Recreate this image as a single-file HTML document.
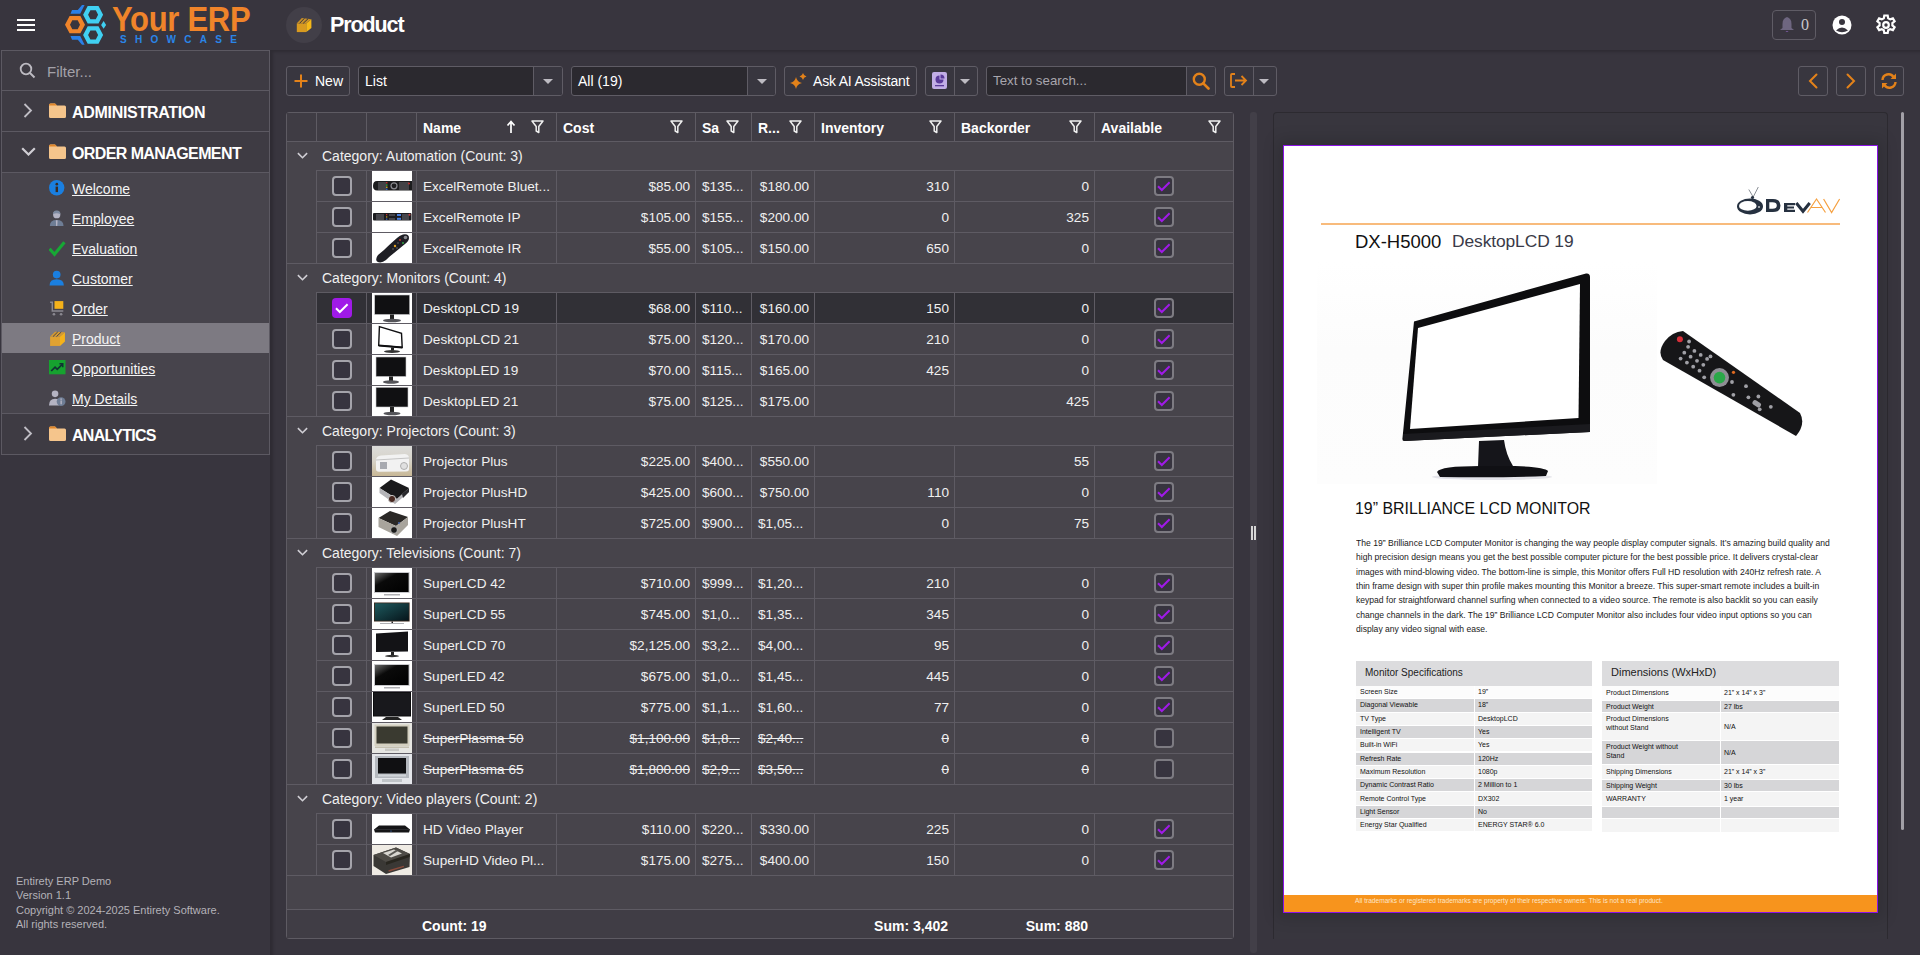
<!DOCTYPE html><html><head><meta charset="utf-8"><style>
*{box-sizing:border-box;margin:0;padding:0}
html,body{width:1920px;height:955px;overflow:hidden;background:#38353e;font-family:"Liberation Sans", sans-serif;color:#f2f2f2}
.a{position:absolute}
.t{position:absolute;white-space:nowrap;line-height:1}
.cb{position:absolute;width:20px;height:20px;border:2px solid #a4a3aa;border-radius:4px;background:#37343f}
.cb2{position:absolute;width:20px;height:20px;border:2px solid #7d7b82;border-radius:4px;background:#37343f}
.cbk{position:absolute;width:20px;height:20px;border-radius:4px;background:#a01ae8}
.btn{position:absolute;height:30px;border:1px solid #5f5c65;border-radius:3px;background:#38363f}
.cmb{position:absolute;height:30px;border:1px solid #5f5c65;border-radius:3px;background:#2b292f;overflow:hidden}
.car{position:absolute;width:0;height:0;border-left:5px solid transparent;border-right:5px solid transparent;border-top:5px solid #bdbbc2}
</style></head><body>

<div class="a" style="left:17px;top:19px;width:18px;height:2px;background:#fff"></div>
<div class="a" style="left:17px;top:24px;width:18px;height:2px;background:#fff"></div>
<div class="a" style="left:17px;top:29px;width:18px;height:2px;background:#fff"></div>
<svg class="a" style="left:0px;top:0px" width="110" height="50" viewBox="0 0 110 50"><path fill-rule="evenodd" fill="#f0842a" d="M65,24.7 L69.6,16.1 L80.4,16.1 L85,24.7 L80.4,33.3 L69.6,33.3Z M70,24.7 L72.3,20.2 L77.7,20.2 L80,24.7 L77.7,29.2 L72.3,29.2Z"/><path fill-rule="evenodd" fill="#40d0f2" d="M83.1,14.8 L87.69999999999999,6.0 L98.5,6.0 L103.1,14.8 L98.5,23.6 L87.69999999999999,23.6Z M88.1,14.8 L90.39999999999999,10.3 L95.8,10.3 L98.1,14.8 L95.8,19.3 L90.39999999999999,19.3Z"/><path fill-rule="evenodd" fill="#40d0f2" d="M83.1,35.0 L87.69999999999999,26.2 L98.5,26.2 L103.1,35.0 L98.5,43.8 L87.69999999999999,43.8Z M88.1,35.0 L90.39999999999999,30.5 L95.8,30.5 L98.1,35.0 L95.8,39.5 L90.39999999999999,39.5Z"/><path fill="#40d0f2" d="M103.6,21 L106.1,24.9 L103.6,28.8 L101.1,24.9Z"/><path fill="#2a80e8" d="M70.5,13.7 L72,10 L77.8,10 L82,5 L84.6,5 L80.2,13.7Z"/><path fill="#2a80e8" d="M70.5,36.1 L72,39.8 L77.8,39.8 L82,44.8 L84.6,44.8 L80.2,36.1Z"/></svg>
<div class="t" style="left:112px;top:1px;font-size:31px;font-weight:700;color:#f0842a;letter-spacing:-0.3px;transform:scaleY(1.14);transform-origin:0 0">Your ERP</div>
<div class="t" style="left:120px;top:35px;font-size:10px;font-weight:700;color:#2a85e8;letter-spacing:8.3px">SHOWCASE</div>
<div class="a" style="left:286px;top:7px;width:36px;height:36px;border-radius:18px;background:#423f48"></div>
<svg class="a" style="left:296px;top:17px" width="16" height="16" viewBox="0 0 16 16">
<path d="M0.8,6.3 H10.3 V15.1 H0.8Z" fill="#d89a20"/><path d="M10.3,6.3 L15.4,2.3 V11 L10.3,15.1Z" fill="#f5b818"/><path d="M0.8,6.3 L5.9,0.9 L15.4,2.3 L10.3,6.3Z" fill="#c89028"/>
<line x1="3.6" y1="6.3" x2="8.4" y2="1.3" stroke="#38353e" stroke-width="1"/><line x1="7.2" y1="6.3" x2="12" y2="1.8" stroke="#38353e" stroke-width="1"/>
</svg>
<div class="t" style="left:330px;top:15px;font-size:21.5px;font-weight:700;color:#fff;letter-spacing:-1.1px">Product</div>
<div class="a" style="left:1772px;top:10px;width:44px;height:30px;border:1px solid #5f5c65;border-radius:4px"></div>
<svg class="a" style="left:1779px;top:16px" width="16" height="18" viewBox="0 0 16 18"><path d="M8,1 C5,2 3.5,4 3.5,8 L3.5,12 L1,14 L15,14 L12.5,12 L12.5,8 C12.5,4 11,2 8,1Z" fill="#6e6680"/><path d="M6.5,15 Q8,17 9.5,15Z" fill="#7a5aa0"/></svg>
<div class="t" style="left:1801px;top:17px;font-size:16px;font-family:'Liberation Serif';color:#c8c6cc">0</div>
<svg class="a" style="left:1832px;top:15px" width="20" height="20" viewBox="0 0 20 20"><circle cx="10" cy="10" r="9.5" fill="#fff"/><circle cx="10" cy="7" r="3" fill="#38353e"/><path d="M4,15.5 Q10,9.5 16,15.5 Q10,19 4,15.5Z" fill="#38353e"/></svg>
<svg class="a" style="left:1874px;top:13px" width="24" height="24" viewBox="0 0 24 24"><path fill="none" stroke="#fff" stroke-width="2.2" d="M10.3,2.5h3.4l.5,2.8 2,1.1 2.7-1 1.7,2.9-2.2,1.8v2.3l2.2,1.8-1.7,2.9-2.7-1-2,1.1-.5,2.8h-3.4l-.5-2.8-2-1.1-2.7,1-1.7-2.9 2.2-1.8v-2.3L3.4,8.3l1.7-2.9 2.7,1 2-1.1z"/><circle cx="12" cy="12" r="2.8" fill="none" stroke="#fff" stroke-width="2.2"/></svg>
<div class="a" style="left:1px;top:50px;width:269px;height:405px;background:#3e3b43;border:1px solid #5c5962"></div>
<svg class="a" style="left:19px;top:62px" width="17" height="17" viewBox="0 0 17 17"><circle cx="7" cy="7" r="5.3" fill="none" stroke="#bdbbc2" stroke-width="1.8"/><line x1="11" y1="11" x2="15.5" y2="15.5" stroke="#bdbbc2" stroke-width="2"/></svg>
<div class="t" style="left:47px;top:64px;font-size:15px;color:#a3a1a8">Filter...</div>
<div class="a" style="left:2px;top:90px;width:267px;height:1px;background:#5c5962"></div>
<div class="a" style="left:2px;top:131px;width:267px;height:1px;background:#5c5962"></div>
<div class="a" style="left:2px;top:172px;width:267px;height:1px;background:#5c5962"></div>
<div class="a" style="left:2px;top:173px;width:267px;height:240px;background:#47444c"></div>
<div class="a" style="left:2px;top:323px;width:267px;height:30px;background:#7d7a82"></div>
<div class="a" style="left:2px;top:413px;width:267px;height:1px;background:#5c5962"></div>
<svg class="a" style="left:23px;top:103px" width="10" height="15" viewBox="0 0 10 15"><path d="M1.5,1 L8,7.5 L1.5,14" fill="none" stroke="#c0bec5" stroke-width="1.8"/></svg>
<svg class="a" style="left:49px;top:103px" width="17" height="15" viewBox="0 0 17 15"><path d="M0,2 Q0,0.5 1.5,0.5 L6,0.5 L8,2.5 L15.5,2.5 Q17,2.5 17,4 L17,13.5 Q17,15 15.5,15 L1.5,15 Q0,15 0,13.5Z" fill="#f5c58c"/><path d="M0,2 Q0,0.5 1.5,0.5 L6,0.5 L8,2.5 L0,2.5Z" fill="#e0862a"/></svg>
<div class="t" style="left:72px;top:105px;font-size:16px;font-weight:700;color:#fff;letter-spacing:-0.3px">ADMINISTRATION</div>
<svg class="a" style="left:21px;top:147px" width="15" height="9" viewBox="0 0 15 9"><path d="M1.2,1.2 L7.5,7.5 L13.8,1.2" fill="none" stroke="#d0ced4" stroke-width="2.2"/></svg>
<svg class="a" style="left:49px;top:144px" width="17" height="15" viewBox="0 0 17 15"><path d="M0,2 Q0,0.5 1.5,0.5 L6,0.5 L8,2.5 L15.5,2.5 Q17,2.5 17,4 L17,13.5 Q17,15 15.5,15 L1.5,15 Q0,15 0,13.5Z" fill="#f5c58c"/><path d="M0,2 Q0,0.5 1.5,0.5 L6,0.5 L8,2.5 L0,2.5Z" fill="#e0862a"/></svg>
<div class="t" style="left:72px;top:146px;font-size:16px;font-weight:700;color:#fff;letter-spacing:-0.6px">ORDER MANAGEMENT</div>
<svg class="a" style="left:23px;top:426px" width="10" height="15" viewBox="0 0 10 15"><path d="M1.5,1 L8,7.5 L1.5,14" fill="none" stroke="#c0bec5" stroke-width="1.8"/></svg>
<svg class="a" style="left:49px;top:426px" width="17" height="15" viewBox="0 0 17 15"><path d="M0,2 Q0,0.5 1.5,0.5 L6,0.5 L8,2.5 L15.5,2.5 Q17,2.5 17,4 L17,13.5 Q17,15 15.5,15 L1.5,15 Q0,15 0,13.5Z" fill="#f5c58c"/><path d="M0,2 Q0,0.5 1.5,0.5 L6,0.5 L8,2.5 L0,2.5Z" fill="#e0862a"/></svg>
<div class="t" style="left:72px;top:428px;font-size:16px;font-weight:700;color:#fff;letter-spacing:-0.7px">ANALYTICS</div>
<svg class="a" style="left:49px;top:180px" width="16.5" height="16.5" viewBox="0 0 15 15"><circle cx="7" cy="7" r="7" fill="#1a7fe0"/><rect x="6" y="6" width="2.2" height="5" fill="#3a2a20"/><circle cx="7.1" cy="3.8" r="1.2" fill="#3a2a20"/></svg>
<div class="t" style="left:72px;top:182px;font-size:14px;color:#f4f4f4;text-decoration:underline;text-underline-offset:1px">Welcome</div>
<svg class="a" style="left:49px;top:210px" width="16.5" height="16.5" viewBox="0 0 15 15"><circle cx="7" cy="4.3" r="3.3" fill="#b4b3c4"/><path d="M3.6,3.8 Q3.8,0.3 7,0.5 Q10.2,0.3 10.4,3.8 Q7,2.2 3.6,3.8Z" fill="#7d8aa0"/><path d="M0.8,14.5 Q0.8,9.2 7,9.2 Q13.2,9.2 13.2,14.5Z" fill="#6e7d95"/><path d="M6.2,9.3 L7.8,9.3 L7.5,14.5 L6.5,14.5Z" fill="#b4b3c4"/></svg>
<div class="t" style="left:72px;top:212px;font-size:14px;color:#f4f4f4;text-decoration:underline;text-underline-offset:1px">Employee</div>
<svg class="a" style="left:49px;top:240px" width="16.5" height="16.5" viewBox="0 0 15 15"><path d="M0.5,8 L5,13 L14,2" fill="none" stroke="#17a835" stroke-width="2.8"/></svg>
<div class="t" style="left:72px;top:242px;font-size:14px;color:#f4f4f4;text-decoration:underline;text-underline-offset:1px">Evaluation</div>
<svg class="a" style="left:49px;top:270px" width="16.5" height="16.5" viewBox="0 0 15 15"><circle cx="7" cy="4.2" r="3.5" fill="#1a7fe0"/><path d="M0.5,14 Q0.5,8.5 7,8.5 Q13.5,8.5 13.5,14Z" fill="#1a7fe0"/></svg>
<div class="t" style="left:72px;top:272px;font-size:14px;color:#f4f4f4;text-decoration:underline;text-underline-offset:1px">Customer</div>
<svg class="a" style="left:49px;top:300px" width="16.5" height="16.5" viewBox="0 0 15 15"><rect x="5" y="1" width="8" height="7" fill="#f5b21a"/><path d="M1,2 L3,2 L3,10 L13,10" fill="none" stroke="#8a8890" stroke-width="1.3"/><circle cx="4.5" cy="13" r="1.2" fill="#8a8890"/><circle cx="11" cy="13" r="1.2" fill="#8a8890"/></svg>
<div class="t" style="left:72px;top:302px;font-size:14px;color:#f4f4f4;text-decoration:underline;text-underline-offset:1px">Order</div>
<svg class="a" style="left:49px;top:330px" width="16.5" height="16.5" viewBox="0 0 15 15"><polygon points="1,6 10,6 10,14.5 1,14.5" fill="#e0a232"/><polygon points="10,6 14.5,2 14.5,10.5 10,14.5" fill="#f5b21a"/><polygon points="1,6 5.5,1.5 14.5,2 10,6" fill="#d59a30"/><line x1="3.6" y1="6" x2="8" y2="1.7" stroke="#47444c" stroke-width="0.9"/><line x1="6.8" y1="6" x2="11.2" y2="1.8" stroke="#47444c" stroke-width="0.9"/></svg>
<div class="t" style="left:72px;top:332px;font-size:14px;color:#f4f4f4;text-decoration:underline;text-underline-offset:1px">Product</div>
<svg class="a" style="left:49px;top:360px" width="16.5" height="16.5" viewBox="0 0 15 15"><rect x="0" y="0" width="15" height="13" fill="#16a22f"/><path d="M2,10 L5.5,6.5 L7.5,8.5 L12,4" fill="none" stroke="#133" stroke-width="1.6"/><path d="M9.5,3.5 L12.5,3.5 L12.5,6.5" fill="none" stroke="#133" stroke-width="1.4"/></svg>
<div class="t" style="left:72px;top:362px;font-size:14px;color:#f4f4f4;text-decoration:underline;text-underline-offset:1px">Opportunities</div>
<svg class="a" style="left:49px;top:390px" width="16.5" height="16.5" viewBox="0 0 15 15"><circle cx="5.5" cy="3.5" r="3" fill="#b4b3c2"/><path d="M0,14 Q0,8 5.5,8 Q9,8 10,10 L9,14Z" fill="#b4b3c2"/><circle cx="11" cy="10.5" r="4" fill="#6e7d95"/><rect x="10.4" y="9.5" width="1.3" height="3.5" fill="#b4b3c2"/><circle cx="11" cy="8.3" r="0.7" fill="#b4b3c2"/></svg>
<div class="t" style="left:72px;top:392px;font-size:14px;color:#f4f4f4;text-decoration:underline;text-underline-offset:1px">My Details</div>
<div class="t" style="left:16px;top:876.0px;font-size:11px;color:#b4b2b8">Entirety ERP Demo</div>
<div class="t" style="left:16px;top:890.3px;font-size:11px;color:#b4b2b8">Version 1.1</div>
<div class="t" style="left:16px;top:904.6px;font-size:11px;color:#b4b2b8">Copyright © 2024-2025 Entirety Software.</div>
<div class="t" style="left:16px;top:918.9px;font-size:11px;color:#b4b2b8">All rights reserved.</div>
<div class="a" style="left:270px;top:50px;width:1650px;height:905px;box-shadow:inset 3px 2px 3px rgba(0,0,0,0.18)"></div>
<div class="btn" style="left:286px;top:66px;width:64px"></div>
<svg class="a" style="left:294px;top:74px" width="14" height="14" viewBox="0 0 14 14"><path d="M7,0.5V13.5M0.5,7H13.5" stroke="#e3821a" stroke-width="2"/></svg>
<div class="t" style="left:315px;top:74px;font-size:14px;color:#fff">New</div>
<div class="cmb" style="left:358px;top:66px;width:205px"><div class="a" style="left:174px;top:0;width:30px;height:28px;background:#38363f;border-left:1px solid #5f5c65"></div></div>
<div class="car" style="left:543px;top:79px"></div>
<div class="t" style="left:365px;top:74px;font-size:14px;color:#fff">List</div>
<div class="cmb" style="left:571px;top:66px;width:205px"><div class="a" style="left:175px;top:0;width:29px;height:28px;background:#38363f;border-left:1px solid #5f5c65"></div></div>
<div class="car" style="left:757px;top:79px"></div>
<div class="t" style="left:578px;top:74px;font-size:14px;color:#fff">All (19)</div>
<div class="btn" style="left:784px;top:66px;width:133px"></div>
<svg class="a" style="left:790px;top:73px" width="17" height="17" viewBox="0 0 17 17"><path d="M6,4 Q7,9 12,10 Q7,11 6,16 Q5,11 0,10 Q5,9 6,4Z" fill="#e3821a"/><path d="M13,0 Q13.6,2.6 16.5,3.5 Q13.6,4.4 13,7 Q12.4,4.4 9.5,3.5 Q12.4,2.6 13,0Z" fill="#e3821a"/></svg>
<div class="t" style="left:813px;top:74px;font-size:14px;color:#fff;letter-spacing:-0.2px">Ask AI Assistant</div>
<div class="btn" style="left:925px;top:66px;width:53px"><div class="a" style="left:28px;top:0;width:1px;height:28px;background:#5f5c65"></div></div>
<svg class="a" style="left:932px;top:72px" width="16" height="17" viewBox="0 0 16 17"><rect x="0" y="0" width="15" height="17" rx="2" fill="#c2aee6"/><path d="M7.5,3.5 A4,4 0 1 0 11.5,7.5 L7.5,7.5Z" fill="#5a3a9a"/><path d="M8.5,2.5 A4,4 0 0 1 12.5,6.5 L8.5,6.5Z" fill="#5a3a9a"/><rect x="3" y="13" width="9" height="1.3" fill="#5a3a9a"/></svg>
<div class="car" style="left:960px;top:79px"></div>
<div class="cmb" style="left:986px;top:66px;width:230px"><div class="a" style="left:199px;top:0;width:30px;height:28px;background:#38363f;border-left:1px solid #5f5c65"></div></div>
<div class="t" style="left:993px;top:74px;font-size:13.3px;color:#a8a6ad">Text to search...</div>
<svg class="a" style="left:1192px;top:72px" width="18" height="18" viewBox="0 0 18 18"><circle cx="7.3" cy="7.3" r="5.5" fill="none" stroke="#e3821a" stroke-width="2.4"/><line x1="11.3" y1="11.3" x2="16.5" y2="16.5" stroke="#e3821a" stroke-width="2.6" stroke-linecap="round"/></svg>
<div class="btn" style="left:1224px;top:66px;width:53px"><div class="a" style="left:28px;top:0;width:1px;height:28px;background:#5f5c65"></div></div>
<svg class="a" style="left:1230px;top:73px" width="18" height="15" viewBox="0 0 18 15"><path d="M5,1 H2 Q1,1 1,2 V13 Q1,14 2,14 H5" fill="none" stroke="#e3821a" stroke-width="1.8"/><path d="M5,7.5 H16 M11.5,3 L16,7.5 L11.5,12" fill="none" stroke="#e3821a" stroke-width="1.8"/></svg>
<div class="car" style="left:1259px;top:79px"></div>
<div class="btn" style="left:1798px;top:66px;width:30px"></div>
<div class="btn" style="left:1836px;top:66px;width:30px"></div>
<div class="btn" style="left:1874px;top:66px;width:30px"></div>
<svg class="a" style="left:1808px;top:73px" width="10" height="16" viewBox="0 0 10 16"><path d="M8.5,1.5 L2,8 L8.5,14.5" fill="none" stroke="#e3821a" stroke-width="2" stroke-linecap="round"/></svg>
<svg class="a" style="left:1846px;top:73px" width="10" height="16" viewBox="0 0 10 16"><path d="M1.5,1.5 L8,8 L1.5,14.5" fill="none" stroke="#e3821a" stroke-width="2" stroke-linecap="round"/></svg>
<svg class="a" style="left:1880px;top:73px" width="18" height="16" viewBox="0 0 18 16"><path d="M2.5,7 A6,6 0 0 1 13.5,4" fill="none" stroke="#e3821a" stroke-width="2.4"/><path d="M15.5,9 A6,6 0 0 1 4.5,12" fill="none" stroke="#e3821a" stroke-width="2.4"/><path d="M16,0.5 V6 H10.5Z" fill="#e3821a"/><path d="M2,15.5 V10 H7.5Z" fill="#e3821a"/></svg>
<div class="a" style="left:286px;top:112px;width:948px;height:827px;background:#47444b;border:1px solid #5e5b63;border-radius:3px"></div>
<div class="a" style="left:287px;top:113px;width:946px;height:29px;background:#3f3c44;border-bottom:1px solid #5e5b63"></div>
<div class="a" style="left:316px;top:113px;width:1px;height:28px;background:#5e5b63"></div>
<div class="a" style="left:366px;top:113px;width:1px;height:28px;background:#5e5b63"></div>
<div class="a" style="left:416px;top:113px;width:1px;height:28px;background:#5e5b63"></div>
<div class="a" style="left:556px;top:113px;width:1px;height:28px;background:#5e5b63"></div>
<div class="a" style="left:695px;top:113px;width:1px;height:28px;background:#5e5b63"></div>
<div class="a" style="left:751px;top:113px;width:1px;height:28px;background:#5e5b63"></div>
<div class="a" style="left:814px;top:113px;width:1px;height:28px;background:#5e5b63"></div>
<div class="a" style="left:954px;top:113px;width:1px;height:28px;background:#5e5b63"></div>
<div class="a" style="left:1094px;top:113px;width:1px;height:28px;background:#5e5b63"></div>
<div class="t" style="left:423px;top:121px;font-size:14px;font-weight:700;color:#fff">Name</div>
<svg class="a" style="left:531px;top:120px" width="13" height="14" viewBox="0 0 13 14"><path d="M1,1 H12 L7.8,6.5 V12.5 L5.2,11 V6.5Z" fill="none" stroke="#f0f0f0" stroke-width="1.5" stroke-linejoin="round"/></svg>
<div class="t" style="left:563px;top:121px;font-size:14px;font-weight:700;color:#fff">Cost</div>
<svg class="a" style="left:670px;top:120px" width="13" height="14" viewBox="0 0 13 14"><path d="M1,1 H12 L7.8,6.5 V12.5 L5.2,11 V6.5Z" fill="none" stroke="#f0f0f0" stroke-width="1.5" stroke-linejoin="round"/></svg>
<div class="t" style="left:702px;top:121px;font-size:14px;font-weight:700;color:#fff">Sa</div>
<svg class="a" style="left:726px;top:120px" width="13" height="14" viewBox="0 0 13 14"><path d="M1,1 H12 L7.8,6.5 V12.5 L5.2,11 V6.5Z" fill="none" stroke="#f0f0f0" stroke-width="1.5" stroke-linejoin="round"/></svg>
<div class="t" style="left:758px;top:121px;font-size:14px;font-weight:700;color:#fff">R...</div>
<svg class="a" style="left:789px;top:120px" width="13" height="14" viewBox="0 0 13 14"><path d="M1,1 H12 L7.8,6.5 V12.5 L5.2,11 V6.5Z" fill="none" stroke="#f0f0f0" stroke-width="1.5" stroke-linejoin="round"/></svg>
<div class="t" style="left:821px;top:121px;font-size:14px;font-weight:700;color:#fff">Inventory</div>
<svg class="a" style="left:929px;top:120px" width="13" height="14" viewBox="0 0 13 14"><path d="M1,1 H12 L7.8,6.5 V12.5 L5.2,11 V6.5Z" fill="none" stroke="#f0f0f0" stroke-width="1.5" stroke-linejoin="round"/></svg>
<div class="t" style="left:961px;top:121px;font-size:14px;font-weight:700;color:#fff">Backorder</div>
<svg class="a" style="left:1069px;top:120px" width="13" height="14" viewBox="0 0 13 14"><path d="M1,1 H12 L7.8,6.5 V12.5 L5.2,11 V6.5Z" fill="none" stroke="#f0f0f0" stroke-width="1.5" stroke-linejoin="round"/></svg>
<div class="t" style="left:1101px;top:121px;font-size:14px;font-weight:700;color:#fff">Available</div>
<svg class="a" style="left:1208px;top:120px" width="13" height="14" viewBox="0 0 13 14"><path d="M1,1 H12 L7.8,6.5 V12.5 L5.2,11 V6.5Z" fill="none" stroke="#f0f0f0" stroke-width="1.5" stroke-linejoin="round"/></svg>
<svg class="a" style="left:506px;top:120px" width="10" height="14" viewBox="0 0 10 14"><path d="M5,13 V2 M1.5,5.5 L5,1.5 L8.5,5.5" fill="none" stroke="#fff" stroke-width="1.7"/></svg>
<div class="a" style="left:287px;top:141px;width:946px;height:1px;background:#5e5b63"></div>
<svg class="a" style="left:297px;top:152px" width="11" height="7" viewBox="0 0 15 9"><path d="M1.2,1.2 L7.5,7.5 L13.8,1.2" fill="none" stroke="#d0ced4" stroke-width="2.2"/></svg>
<div class="t" style="left:322px;top:149px;font-size:14px;color:#f0f0f0">Category: Automation (Count: 3)</div>
<div class="a" style="left:316px;top:170px;width:917px;height:1px;background:#5e5b63"></div>
<div class="a" style="left:316px;top:171px;width:1px;height:30px;background:#5e5b63"></div>
<div class="a" style="left:366px;top:171px;width:1px;height:30px;background:#5e5b63"></div>
<div class="a" style="left:416px;top:171px;width:1px;height:30px;background:#5e5b63"></div>
<div class="a" style="left:556px;top:171px;width:1px;height:30px;background:#5e5b63"></div>
<div class="a" style="left:695px;top:171px;width:1px;height:30px;background:#5e5b63"></div>
<div class="a" style="left:751px;top:171px;width:1px;height:30px;background:#5e5b63"></div>
<div class="a" style="left:814px;top:171px;width:1px;height:30px;background:#5e5b63"></div>
<div class="a" style="left:954px;top:171px;width:1px;height:30px;background:#5e5b63"></div>
<div class="a" style="left:1094px;top:171px;width:1px;height:30px;background:#5e5b63"></div>
<div class="cb" style="left:332px;top:176px"></div>
<svg class="a" style="left:372px;top:171px" width="40" height="30" viewBox="0 0 40 30"><rect width="40" height="30" fill="#fff"/><path d="M5,10 H40 V19.6 H5 Q1,19.6 1,14.8 Q1,10 5,10Z" fill="#1c1c1e"/><g fill="#6a6a70"><rect x="6" y="11.5" width="8" height="1"/><rect x="6" y="13.5" width="8" height="1"/><rect x="6" y="15.5" width="8" height="1"/><rect x="6" y="17.5" width="8" height="1"/><rect x="27" y="11.5" width="10" height="1"/><rect x="27" y="13.5" width="10" height="1"/><rect x="27" y="15.5" width="10" height="1"/><rect x="27" y="17.5" width="10" height="1"/></g><rect x="14" y="11" width="1.5" height="1.5" fill="#c03030"/><rect x="14" y="13.3" width="1.5" height="1.5" fill="#30a040"/><rect x="14" y="15.5" width="1.5" height="1.5" fill="#c0a020"/><rect x="14" y="17.5" width="1.5" height="1.5" fill="#3060c0"/><circle cx="22" cy="14.8" r="3" fill="none" stroke="#8a8a90" stroke-width="1.2"/><circle cx="37" cy="12.5" r="1" fill="#c03030"/></svg>
<div class="t" style="left:423px;top:179.5px;font-size:13.6px;color:#f0f0f0;">ExcelRemote Bluet...</div>
<div class="t" style="right:1230px;top:179.5px;font-size:13.6px;color:#f0f0f0;">$85.00</div>
<div class="t" style="right:971px;top:179.5px;font-size:13.6px;color:#f0f0f0;">310</div>
<div class="t" style="right:831px;top:179.5px;font-size:13.6px;color:#f0f0f0;">0</div>
<div class="t" style="left:702px;top:179.5px;font-size:13.6px;color:#f0f0f0;">$135...</div>
<div class="t" style="right:1111px;top:179.5px;font-size:13.6px;color:#f0f0f0;">$180.00</div>
<div class="cb2" style="left:1154px;top:176px"></div>
<svg class="a" style="left:1154px;top:176px" width="20" height="20" viewBox="0 0 20 20"><path d="M4,10.3 L7.8,14 L15.6,6.3" fill="none" stroke="#a01ae8" stroke-width="2"/></svg>
<div class="a" style="left:316px;top:201px;width:917px;height:1px;background:#5e5b63"></div>
<div class="a" style="left:316px;top:202px;width:1px;height:30px;background:#5e5b63"></div>
<div class="a" style="left:366px;top:202px;width:1px;height:30px;background:#5e5b63"></div>
<div class="a" style="left:416px;top:202px;width:1px;height:30px;background:#5e5b63"></div>
<div class="a" style="left:556px;top:202px;width:1px;height:30px;background:#5e5b63"></div>
<div class="a" style="left:695px;top:202px;width:1px;height:30px;background:#5e5b63"></div>
<div class="a" style="left:751px;top:202px;width:1px;height:30px;background:#5e5b63"></div>
<div class="a" style="left:814px;top:202px;width:1px;height:30px;background:#5e5b63"></div>
<div class="a" style="left:954px;top:202px;width:1px;height:30px;background:#5e5b63"></div>
<div class="a" style="left:1094px;top:202px;width:1px;height:30px;background:#5e5b63"></div>
<div class="cb" style="left:332px;top:207px"></div>
<svg class="a" style="left:372px;top:202px" width="40" height="30" viewBox="0 0 40 30"><rect width="40" height="30" fill="#fff"/><rect x="1" y="11" width="38.5" height="7.6" rx="1" fill="#1c1c20"/><g fill="#707078"><rect x="4" y="12.5" width="8" height="1"/><rect x="4" y="14.5" width="8" height="1"/><rect x="4" y="16.5" width="8" height="1"/><rect x="17" y="12.5" width="6" height="1"/><rect x="17" y="16.5" width="6" height="1"/><rect x="30" y="12.5" width="7" height="1"/><rect x="30" y="14.5" width="7" height="1"/><rect x="30" y="16.5" width="7" height="1"/></g><rect x="25" y="12" width="4" height="2" fill="#4a80e0"/><rect x="25" y="15.8" width="4" height="2" fill="#4a80e0"/><rect x="14" y="12" width="1.3" height="1.3" fill="#c03030"/><rect x="14" y="14.3" width="1.3" height="1.3" fill="#c0a020"/><rect x="14" y="16.5" width="1.3" height="1.3" fill="#3060c0"/><circle cx="37.5" cy="12.8" r="1" fill="#d04040"/></svg>
<div class="t" style="left:423px;top:210.5px;font-size:13.6px;color:#f0f0f0;">ExcelRemote IP</div>
<div class="t" style="right:1230px;top:210.5px;font-size:13.6px;color:#f0f0f0;">$105.00</div>
<div class="t" style="right:971px;top:210.5px;font-size:13.6px;color:#f0f0f0;">0</div>
<div class="t" style="right:831px;top:210.5px;font-size:13.6px;color:#f0f0f0;">325</div>
<div class="t" style="left:702px;top:210.5px;font-size:13.6px;color:#f0f0f0;">$155...</div>
<div class="t" style="right:1111px;top:210.5px;font-size:13.6px;color:#f0f0f0;">$200.00</div>
<div class="cb2" style="left:1154px;top:207px"></div>
<svg class="a" style="left:1154px;top:207px" width="20" height="20" viewBox="0 0 20 20"><path d="M4,10.3 L7.8,14 L15.6,6.3" fill="none" stroke="#a01ae8" stroke-width="2"/></svg>
<div class="a" style="left:316px;top:232px;width:917px;height:1px;background:#5e5b63"></div>
<div class="a" style="left:316px;top:233px;width:1px;height:30px;background:#5e5b63"></div>
<div class="a" style="left:366px;top:233px;width:1px;height:30px;background:#5e5b63"></div>
<div class="a" style="left:416px;top:233px;width:1px;height:30px;background:#5e5b63"></div>
<div class="a" style="left:556px;top:233px;width:1px;height:30px;background:#5e5b63"></div>
<div class="a" style="left:695px;top:233px;width:1px;height:30px;background:#5e5b63"></div>
<div class="a" style="left:751px;top:233px;width:1px;height:30px;background:#5e5b63"></div>
<div class="a" style="left:814px;top:233px;width:1px;height:30px;background:#5e5b63"></div>
<div class="a" style="left:954px;top:233px;width:1px;height:30px;background:#5e5b63"></div>
<div class="a" style="left:1094px;top:233px;width:1px;height:30px;background:#5e5b63"></div>
<div class="cb" style="left:332px;top:238px"></div>
<svg class="a" style="left:372px;top:233px" width="40" height="30" viewBox="0 0 40 30"><rect width="40" height="30" fill="#fff"/><path d="M31,1.5 Q37,0.5 37,5 Q37,8 33,11 L22,20 Q18,23 14,27 Q9,31 5,28.5 Q3,26 6,22 L12,17 Q17,12 25,5 Q28,2 31,1.5Z" fill="#1e1e24"/><circle cx="33.5" cy="4.5" r="1.8" fill="#8a8a90"/><circle cx="28" cy="7" r="1" fill="#c03030"/><circle cx="31" cy="10" r="1" fill="#30a040"/><circle cx="23" cy="13" r="1.2" fill="#e0a020"/><g fill="#777"><circle cx="26" cy="10" r="0.7"/><circle cx="21" cy="16" r="0.7"/><circle cx="25" cy="15" r="0.7"/></g></svg>
<div class="t" style="left:423px;top:241.5px;font-size:13.6px;color:#f0f0f0;">ExcelRemote IR</div>
<div class="t" style="right:1230px;top:241.5px;font-size:13.6px;color:#f0f0f0;">$55.00</div>
<div class="t" style="right:971px;top:241.5px;font-size:13.6px;color:#f0f0f0;">650</div>
<div class="t" style="right:831px;top:241.5px;font-size:13.6px;color:#f0f0f0;">0</div>
<div class="t" style="left:702px;top:241.5px;font-size:13.6px;color:#f0f0f0;">$105...</div>
<div class="t" style="right:1111px;top:241.5px;font-size:13.6px;color:#f0f0f0;">$150.00</div>
<div class="cb2" style="left:1154px;top:238px"></div>
<svg class="a" style="left:1154px;top:238px" width="20" height="20" viewBox="0 0 20 20"><path d="M4,10.3 L7.8,14 L15.6,6.3" fill="none" stroke="#a01ae8" stroke-width="2"/></svg>
<div class="a" style="left:287px;top:263px;width:946px;height:1px;background:#5e5b63"></div>
<svg class="a" style="left:297px;top:274px" width="11" height="7" viewBox="0 0 15 9"><path d="M1.2,1.2 L7.5,7.5 L13.8,1.2" fill="none" stroke="#d0ced4" stroke-width="2.2"/></svg>
<div class="t" style="left:322px;top:271px;font-size:14px;color:#f0f0f0">Category: Monitors (Count: 4)</div>
<div class="a" style="left:317px;top:293px;width:916px;height:30px;background:#313036"></div>
<div class="a" style="left:316px;top:292px;width:917px;height:1px;background:#5e5b63"></div>
<div class="a" style="left:316px;top:293px;width:1px;height:30px;background:#5e5b63"></div>
<div class="a" style="left:366px;top:293px;width:1px;height:30px;background:#5e5b63"></div>
<div class="a" style="left:416px;top:293px;width:1px;height:30px;background:#5e5b63"></div>
<div class="a" style="left:556px;top:293px;width:1px;height:30px;background:#5e5b63"></div>
<div class="a" style="left:695px;top:293px;width:1px;height:30px;background:#5e5b63"></div>
<div class="a" style="left:751px;top:293px;width:1px;height:30px;background:#5e5b63"></div>
<div class="a" style="left:814px;top:293px;width:1px;height:30px;background:#5e5b63"></div>
<div class="a" style="left:954px;top:293px;width:1px;height:30px;background:#5e5b63"></div>
<div class="a" style="left:1094px;top:293px;width:1px;height:30px;background:#5e5b63"></div>
<div class="cbk" style="left:332px;top:298px"></div><svg class="a" style="left:332px;top:298px" width="20" height="20" viewBox="0 0 20 20"><path d="M4,10.3 L7.8,14 L15.6,6.3" fill="none" stroke="#fff" stroke-width="2"/></svg>
<svg class="a" style="left:372px;top:293px" width="40" height="30" viewBox="0 0 40 30"><rect width="40" height="30" fill="#fff"/><rect x="2.7" y="2" width="35" height="19.5" fill="#101012" stroke="#c8c8cc" stroke-width="0.6"/><rect x="18" y="21.5" width="4" height="5" fill="#222"/><ellipse cx="20" cy="27.5" rx="9" ry="1.8" fill="#55555a"/></svg>
<div class="t" style="left:423px;top:301.5px;font-size:13.6px;color:#f0f0f0;">DesktopLCD 19</div>
<div class="t" style="right:1230px;top:301.5px;font-size:13.6px;color:#f0f0f0;">$68.00</div>
<div class="t" style="right:971px;top:301.5px;font-size:13.6px;color:#f0f0f0;">150</div>
<div class="t" style="right:831px;top:301.5px;font-size:13.6px;color:#f0f0f0;">0</div>
<div class="t" style="left:702px;top:301.5px;font-size:13.6px;color:#f0f0f0;">$110...</div>
<div class="t" style="right:1111px;top:301.5px;font-size:13.6px;color:#f0f0f0;">$160.00</div>
<div class="cb2" style="left:1154px;top:298px"></div>
<svg class="a" style="left:1154px;top:298px" width="20" height="20" viewBox="0 0 20 20"><path d="M4,10.3 L7.8,14 L15.6,6.3" fill="none" stroke="#a01ae8" stroke-width="2"/></svg>
<div class="a" style="left:316px;top:323px;width:917px;height:1px;background:#5e5b63"></div>
<div class="a" style="left:316px;top:324px;width:1px;height:30px;background:#5e5b63"></div>
<div class="a" style="left:366px;top:324px;width:1px;height:30px;background:#5e5b63"></div>
<div class="a" style="left:416px;top:324px;width:1px;height:30px;background:#5e5b63"></div>
<div class="a" style="left:556px;top:324px;width:1px;height:30px;background:#5e5b63"></div>
<div class="a" style="left:695px;top:324px;width:1px;height:30px;background:#5e5b63"></div>
<div class="a" style="left:751px;top:324px;width:1px;height:30px;background:#5e5b63"></div>
<div class="a" style="left:814px;top:324px;width:1px;height:30px;background:#5e5b63"></div>
<div class="a" style="left:954px;top:324px;width:1px;height:30px;background:#5e5b63"></div>
<div class="a" style="left:1094px;top:324px;width:1px;height:30px;background:#5e5b63"></div>
<div class="cb" style="left:332px;top:329px"></div>
<svg class="a" style="left:372px;top:324px" width="40" height="30" viewBox="0 0 40 30"><rect width="40" height="30" fill="#fff"/><path d="M7.4,2.7 L29.5,9.4 L30.2,23.5 L6.7,21.4Z" fill="#fff" stroke="#101012" stroke-width="1.4"/><path d="M6.7,21.4 L30.2,23.5" stroke="#101012" stroke-width="2"/><rect x="19" y="23.5" width="3" height="3" fill="#222"/><ellipse cx="20" cy="27.5" rx="8" ry="1.5" fill="#333"/></svg>
<div class="t" style="left:423px;top:332.5px;font-size:13.6px;color:#f0f0f0;">DesktopLCD 21</div>
<div class="t" style="right:1230px;top:332.5px;font-size:13.6px;color:#f0f0f0;">$75.00</div>
<div class="t" style="right:971px;top:332.5px;font-size:13.6px;color:#f0f0f0;">210</div>
<div class="t" style="right:831px;top:332.5px;font-size:13.6px;color:#f0f0f0;">0</div>
<div class="t" style="left:702px;top:332.5px;font-size:13.6px;color:#f0f0f0;">$120...</div>
<div class="t" style="right:1111px;top:332.5px;font-size:13.6px;color:#f0f0f0;">$170.00</div>
<div class="cb2" style="left:1154px;top:329px"></div>
<svg class="a" style="left:1154px;top:329px" width="20" height="20" viewBox="0 0 20 20"><path d="M4,10.3 L7.8,14 L15.6,6.3" fill="none" stroke="#a01ae8" stroke-width="2"/></svg>
<div class="a" style="left:316px;top:354px;width:917px;height:1px;background:#5e5b63"></div>
<div class="a" style="left:316px;top:355px;width:1px;height:30px;background:#5e5b63"></div>
<div class="a" style="left:366px;top:355px;width:1px;height:30px;background:#5e5b63"></div>
<div class="a" style="left:416px;top:355px;width:1px;height:30px;background:#5e5b63"></div>
<div class="a" style="left:556px;top:355px;width:1px;height:30px;background:#5e5b63"></div>
<div class="a" style="left:695px;top:355px;width:1px;height:30px;background:#5e5b63"></div>
<div class="a" style="left:751px;top:355px;width:1px;height:30px;background:#5e5b63"></div>
<div class="a" style="left:814px;top:355px;width:1px;height:30px;background:#5e5b63"></div>
<div class="a" style="left:954px;top:355px;width:1px;height:30px;background:#5e5b63"></div>
<div class="a" style="left:1094px;top:355px;width:1px;height:30px;background:#5e5b63"></div>
<div class="cb" style="left:332px;top:360px"></div>
<svg class="a" style="left:372px;top:355px" width="40" height="30" viewBox="0 0 40 30"><rect width="40" height="30" fill="#fff"/><rect x="4" y="2" width="30" height="19.5" fill="#101012" stroke="#c8c8cc" stroke-width="0.6"/><rect x="17" y="21.5" width="4" height="4.5" fill="#222"/><ellipse cx="19" cy="27" rx="8" ry="1.8" fill="#55555a"/></svg>
<div class="t" style="left:423px;top:363.5px;font-size:13.6px;color:#f0f0f0;">DesktopLED 19</div>
<div class="t" style="right:1230px;top:363.5px;font-size:13.6px;color:#f0f0f0;">$70.00</div>
<div class="t" style="right:971px;top:363.5px;font-size:13.6px;color:#f0f0f0;">425</div>
<div class="t" style="right:831px;top:363.5px;font-size:13.6px;color:#f0f0f0;">0</div>
<div class="t" style="left:702px;top:363.5px;font-size:13.6px;color:#f0f0f0;">$115...</div>
<div class="t" style="right:1111px;top:363.5px;font-size:13.6px;color:#f0f0f0;">$165.00</div>
<div class="cb2" style="left:1154px;top:360px"></div>
<svg class="a" style="left:1154px;top:360px" width="20" height="20" viewBox="0 0 20 20"><path d="M4,10.3 L7.8,14 L15.6,6.3" fill="none" stroke="#a01ae8" stroke-width="2"/></svg>
<div class="a" style="left:316px;top:385px;width:917px;height:1px;background:#5e5b63"></div>
<div class="a" style="left:316px;top:386px;width:1px;height:30px;background:#5e5b63"></div>
<div class="a" style="left:366px;top:386px;width:1px;height:30px;background:#5e5b63"></div>
<div class="a" style="left:416px;top:386px;width:1px;height:30px;background:#5e5b63"></div>
<div class="a" style="left:556px;top:386px;width:1px;height:30px;background:#5e5b63"></div>
<div class="a" style="left:695px;top:386px;width:1px;height:30px;background:#5e5b63"></div>
<div class="a" style="left:751px;top:386px;width:1px;height:30px;background:#5e5b63"></div>
<div class="a" style="left:814px;top:386px;width:1px;height:30px;background:#5e5b63"></div>
<div class="a" style="left:954px;top:386px;width:1px;height:30px;background:#5e5b63"></div>
<div class="a" style="left:1094px;top:386px;width:1px;height:30px;background:#5e5b63"></div>
<div class="cb" style="left:332px;top:391px"></div>
<svg class="a" style="left:372px;top:386px" width="40" height="30" viewBox="0 0 40 30"><rect width="40" height="30" fill="#fff"/><rect x="4" y="1.3" width="32" height="19.7" fill="#101012" stroke="#c8c8cc" stroke-width="0.6"/><rect x="18" y="21" width="4" height="5" fill="#222"/><ellipse cx="20" cy="27.5" rx="8.5" ry="1.8" fill="#55555a"/></svg>
<div class="t" style="left:423px;top:394.5px;font-size:13.6px;color:#f0f0f0;">DesktopLED 21</div>
<div class="t" style="right:1230px;top:394.5px;font-size:13.6px;color:#f0f0f0;">$75.00</div>
<div class="t" style="right:831px;top:394.5px;font-size:13.6px;color:#f0f0f0;">425</div>
<div class="t" style="left:702px;top:394.5px;font-size:13.6px;color:#f0f0f0;">$125...</div>
<div class="t" style="right:1111px;top:394.5px;font-size:13.6px;color:#f0f0f0;">$175.00</div>
<div class="cb2" style="left:1154px;top:391px"></div>
<svg class="a" style="left:1154px;top:391px" width="20" height="20" viewBox="0 0 20 20"><path d="M4,10.3 L7.8,14 L15.6,6.3" fill="none" stroke="#a01ae8" stroke-width="2"/></svg>
<div class="a" style="left:287px;top:416px;width:946px;height:1px;background:#5e5b63"></div>
<svg class="a" style="left:297px;top:427px" width="11" height="7" viewBox="0 0 15 9"><path d="M1.2,1.2 L7.5,7.5 L13.8,1.2" fill="none" stroke="#d0ced4" stroke-width="2.2"/></svg>
<div class="t" style="left:322px;top:424px;font-size:14px;color:#f0f0f0">Category: Projectors (Count: 3)</div>
<div class="a" style="left:316px;top:445px;width:917px;height:1px;background:#5e5b63"></div>
<div class="a" style="left:316px;top:446px;width:1px;height:30px;background:#5e5b63"></div>
<div class="a" style="left:366px;top:446px;width:1px;height:30px;background:#5e5b63"></div>
<div class="a" style="left:416px;top:446px;width:1px;height:30px;background:#5e5b63"></div>
<div class="a" style="left:556px;top:446px;width:1px;height:30px;background:#5e5b63"></div>
<div class="a" style="left:695px;top:446px;width:1px;height:30px;background:#5e5b63"></div>
<div class="a" style="left:751px;top:446px;width:1px;height:30px;background:#5e5b63"></div>
<div class="a" style="left:814px;top:446px;width:1px;height:30px;background:#5e5b63"></div>
<div class="a" style="left:954px;top:446px;width:1px;height:30px;background:#5e5b63"></div>
<div class="a" style="left:1094px;top:446px;width:1px;height:30px;background:#5e5b63"></div>
<div class="cb" style="left:332px;top:451px"></div>
<svg class="a" style="left:372px;top:446px" width="40" height="30" viewBox="0 0 40 30"><defs><linearGradient id="pg1" x1="0" y1="0" x2="0" y2="1"><stop offset="0" stop-color="#dcdcda"/><stop offset="0.5" stop-color="#d6d2c8"/><stop offset="1" stop-color="#c8b896"/></linearGradient></defs><rect width="40" height="30" fill="url(#pg1)"/><path d="M4,14 Q4,10 9,9.5 L33,8 Q37,8.5 37,12 L37,23 Q37,25.5 34,25.5 L7,25.8 Q4,25.8 4,23Z" fill="#f2f2f2"/><path d="M4,14 L37,12" stroke="#b8b8b8" stroke-width="0.8"/><rect x="8" y="16" width="7" height="7" fill="#a8aab0"/><circle cx="32" cy="20" r="3.5" fill="#e0e0e0" stroke="#a0a0a0" stroke-width="0.8"/></svg>
<div class="t" style="left:423px;top:454.5px;font-size:13.6px;color:#f0f0f0;">Projector Plus</div>
<div class="t" style="right:1230px;top:454.5px;font-size:13.6px;color:#f0f0f0;">$225.00</div>
<div class="t" style="right:831px;top:454.5px;font-size:13.6px;color:#f0f0f0;">55</div>
<div class="t" style="left:702px;top:454.5px;font-size:13.6px;color:#f0f0f0;">$400...</div>
<div class="t" style="right:1111px;top:454.5px;font-size:13.6px;color:#f0f0f0;">$550.00</div>
<div class="cb2" style="left:1154px;top:451px"></div>
<svg class="a" style="left:1154px;top:451px" width="20" height="20" viewBox="0 0 20 20"><path d="M4,10.3 L7.8,14 L15.6,6.3" fill="none" stroke="#a01ae8" stroke-width="2"/></svg>
<div class="a" style="left:316px;top:476px;width:917px;height:1px;background:#5e5b63"></div>
<div class="a" style="left:316px;top:477px;width:1px;height:30px;background:#5e5b63"></div>
<div class="a" style="left:366px;top:477px;width:1px;height:30px;background:#5e5b63"></div>
<div class="a" style="left:416px;top:477px;width:1px;height:30px;background:#5e5b63"></div>
<div class="a" style="left:556px;top:477px;width:1px;height:30px;background:#5e5b63"></div>
<div class="a" style="left:695px;top:477px;width:1px;height:30px;background:#5e5b63"></div>
<div class="a" style="left:751px;top:477px;width:1px;height:30px;background:#5e5b63"></div>
<div class="a" style="left:814px;top:477px;width:1px;height:30px;background:#5e5b63"></div>
<div class="a" style="left:954px;top:477px;width:1px;height:30px;background:#5e5b63"></div>
<div class="a" style="left:1094px;top:477px;width:1px;height:30px;background:#5e5b63"></div>
<div class="cb" style="left:332px;top:482px"></div>
<svg class="a" style="left:372px;top:477px" width="40" height="30" viewBox="0 0 40 30"><rect width="40" height="30" fill="#fff"/><path d="M7.5,11 L19,2.5 L37,11 L25,22Z" fill="#1a1a1c"/><path d="M7.5,11 L25,22 L37,11 L37,15 L23,27 L7.5,16Z" fill="#b4b4b8"/><path d="M30,17 L37,11 L37,15 L31,21Z" fill="#2a2a2e"/><circle cx="20" cy="22" r="3.6" fill="#4a2a22" stroke="#c8c8c8" stroke-width="1"/></svg>
<div class="t" style="left:423px;top:485.5px;font-size:13.6px;color:#f0f0f0;">Projector PlusHD</div>
<div class="t" style="right:1230px;top:485.5px;font-size:13.6px;color:#f0f0f0;">$425.00</div>
<div class="t" style="right:971px;top:485.5px;font-size:13.6px;color:#f0f0f0;">110</div>
<div class="t" style="right:831px;top:485.5px;font-size:13.6px;color:#f0f0f0;">0</div>
<div class="t" style="left:702px;top:485.5px;font-size:13.6px;color:#f0f0f0;">$600...</div>
<div class="t" style="right:1111px;top:485.5px;font-size:13.6px;color:#f0f0f0;">$750.00</div>
<div class="cb2" style="left:1154px;top:482px"></div>
<svg class="a" style="left:1154px;top:482px" width="20" height="20" viewBox="0 0 20 20"><path d="M4,10.3 L7.8,14 L15.6,6.3" fill="none" stroke="#a01ae8" stroke-width="2"/></svg>
<div class="a" style="left:316px;top:507px;width:917px;height:1px;background:#5e5b63"></div>
<div class="a" style="left:316px;top:508px;width:1px;height:30px;background:#5e5b63"></div>
<div class="a" style="left:366px;top:508px;width:1px;height:30px;background:#5e5b63"></div>
<div class="a" style="left:416px;top:508px;width:1px;height:30px;background:#5e5b63"></div>
<div class="a" style="left:556px;top:508px;width:1px;height:30px;background:#5e5b63"></div>
<div class="a" style="left:695px;top:508px;width:1px;height:30px;background:#5e5b63"></div>
<div class="a" style="left:751px;top:508px;width:1px;height:30px;background:#5e5b63"></div>
<div class="a" style="left:814px;top:508px;width:1px;height:30px;background:#5e5b63"></div>
<div class="a" style="left:954px;top:508px;width:1px;height:30px;background:#5e5b63"></div>
<div class="a" style="left:1094px;top:508px;width:1px;height:30px;background:#5e5b63"></div>
<div class="cb" style="left:332px;top:513px"></div>
<svg class="a" style="left:372px;top:508px" width="40" height="30" viewBox="0 0 40 30"><rect width="40" height="30" fill="#fff"/><path d="M6.5,10 L18,3 L36,9 L24,18Z" fill="#2a2826"/><path d="M6.5,10 L24,18 L36,9 L36,17 L25,28 L6.5,19Z" fill="#a8a49c"/><circle cx="22" cy="22" r="3.4" fill="#1a1a1a" stroke="#d0d0d0" stroke-width="0.8"/><circle cx="27" cy="15" r="1" fill="#4a6ab0"/></svg>
<div class="t" style="left:423px;top:516.5px;font-size:13.6px;color:#f0f0f0;">Projector PlusHT</div>
<div class="t" style="right:1230px;top:516.5px;font-size:13.6px;color:#f0f0f0;">$725.00</div>
<div class="t" style="right:971px;top:516.5px;font-size:13.6px;color:#f0f0f0;">0</div>
<div class="t" style="right:831px;top:516.5px;font-size:13.6px;color:#f0f0f0;">75</div>
<div class="t" style="left:702px;top:516.5px;font-size:13.6px;color:#f0f0f0;">$900...</div>
<div class="t" style="left:758px;top:516.5px;font-size:13.6px;color:#f0f0f0;">$1,05...</div>
<div class="cb2" style="left:1154px;top:513px"></div>
<svg class="a" style="left:1154px;top:513px" width="20" height="20" viewBox="0 0 20 20"><path d="M4,10.3 L7.8,14 L15.6,6.3" fill="none" stroke="#a01ae8" stroke-width="2"/></svg>
<div class="a" style="left:287px;top:538px;width:946px;height:1px;background:#5e5b63"></div>
<svg class="a" style="left:297px;top:549px" width="11" height="7" viewBox="0 0 15 9"><path d="M1.2,1.2 L7.5,7.5 L13.8,1.2" fill="none" stroke="#d0ced4" stroke-width="2.2"/></svg>
<div class="t" style="left:322px;top:546px;font-size:14px;color:#f0f0f0">Category: Televisions (Count: 7)</div>
<div class="a" style="left:316px;top:567px;width:917px;height:1px;background:#5e5b63"></div>
<div class="a" style="left:316px;top:568px;width:1px;height:30px;background:#5e5b63"></div>
<div class="a" style="left:366px;top:568px;width:1px;height:30px;background:#5e5b63"></div>
<div class="a" style="left:416px;top:568px;width:1px;height:30px;background:#5e5b63"></div>
<div class="a" style="left:556px;top:568px;width:1px;height:30px;background:#5e5b63"></div>
<div class="a" style="left:695px;top:568px;width:1px;height:30px;background:#5e5b63"></div>
<div class="a" style="left:751px;top:568px;width:1px;height:30px;background:#5e5b63"></div>
<div class="a" style="left:814px;top:568px;width:1px;height:30px;background:#5e5b63"></div>
<div class="a" style="left:954px;top:568px;width:1px;height:30px;background:#5e5b63"></div>
<div class="a" style="left:1094px;top:568px;width:1px;height:30px;background:#5e5b63"></div>
<div class="cb" style="left:332px;top:573px"></div>
<svg class="a" style="left:372px;top:568px" width="40" height="30" viewBox="0 0 40 30"><defs><linearGradient id="tg1" x1="0" y1="0" x2="1" y2="1"><stop offset="0" stop-color="#6a6a6a"/><stop offset="0.35" stop-color="#0a0a0a"/><stop offset="1" stop-color="#000"/></linearGradient></defs><rect width="40" height="30" fill="#fff"/><rect x="2" y="4" width="35.6" height="21" fill="#c8c8cc"/><rect x="3" y="5" width="33.6" height="19" fill="url(#tg1)"/><rect x="12" y="26" width="16" height="1.5" fill="#b0b0b4"/></svg>
<div class="t" style="left:423px;top:576.5px;font-size:13.6px;color:#f0f0f0;">SuperLCD 42</div>
<div class="t" style="right:1230px;top:576.5px;font-size:13.6px;color:#f0f0f0;">$710.00</div>
<div class="t" style="right:971px;top:576.5px;font-size:13.6px;color:#f0f0f0;">210</div>
<div class="t" style="right:831px;top:576.5px;font-size:13.6px;color:#f0f0f0;">0</div>
<div class="t" style="left:702px;top:576.5px;font-size:13.6px;color:#f0f0f0;">$999...</div>
<div class="t" style="left:758px;top:576.5px;font-size:13.6px;color:#f0f0f0;">$1,20...</div>
<div class="cb2" style="left:1154px;top:573px"></div>
<svg class="a" style="left:1154px;top:573px" width="20" height="20" viewBox="0 0 20 20"><path d="M4,10.3 L7.8,14 L15.6,6.3" fill="none" stroke="#a01ae8" stroke-width="2"/></svg>
<div class="a" style="left:316px;top:598px;width:917px;height:1px;background:#5e5b63"></div>
<div class="a" style="left:316px;top:599px;width:1px;height:30px;background:#5e5b63"></div>
<div class="a" style="left:366px;top:599px;width:1px;height:30px;background:#5e5b63"></div>
<div class="a" style="left:416px;top:599px;width:1px;height:30px;background:#5e5b63"></div>
<div class="a" style="left:556px;top:599px;width:1px;height:30px;background:#5e5b63"></div>
<div class="a" style="left:695px;top:599px;width:1px;height:30px;background:#5e5b63"></div>
<div class="a" style="left:751px;top:599px;width:1px;height:30px;background:#5e5b63"></div>
<div class="a" style="left:814px;top:599px;width:1px;height:30px;background:#5e5b63"></div>
<div class="a" style="left:954px;top:599px;width:1px;height:30px;background:#5e5b63"></div>
<div class="a" style="left:1094px;top:599px;width:1px;height:30px;background:#5e5b63"></div>
<div class="cb" style="left:332px;top:604px"></div>
<svg class="a" style="left:372px;top:599px" width="40" height="30" viewBox="0 0 40 30"><defs><linearGradient id="tg2" x1="0" y1="0" x2="1" y2="1"><stop offset="0" stop-color="#1e5a5e"/><stop offset="1" stop-color="#06141a"/></linearGradient></defs><rect width="40" height="30" fill="#fff"/><rect x="2" y="3.5" width="35.6" height="19" fill="#3a2418"/><rect x="2.8" y="4.3" width="34" height="17.4" fill="url(#tg2)"/><rect x="19.5" y="22.5" width="1.5" height="1.5" fill="#222"/><rect x="8" y="24" width="24" height="1" fill="#b0b0b4"/></svg>
<div class="t" style="left:423px;top:607.5px;font-size:13.6px;color:#f0f0f0;">SuperLCD 55</div>
<div class="t" style="right:1230px;top:607.5px;font-size:13.6px;color:#f0f0f0;">$745.00</div>
<div class="t" style="right:971px;top:607.5px;font-size:13.6px;color:#f0f0f0;">345</div>
<div class="t" style="right:831px;top:607.5px;font-size:13.6px;color:#f0f0f0;">0</div>
<div class="t" style="left:702px;top:607.5px;font-size:13.6px;color:#f0f0f0;">$1,0...</div>
<div class="t" style="left:758px;top:607.5px;font-size:13.6px;color:#f0f0f0;">$1,35...</div>
<div class="cb2" style="left:1154px;top:604px"></div>
<svg class="a" style="left:1154px;top:604px" width="20" height="20" viewBox="0 0 20 20"><path d="M4,10.3 L7.8,14 L15.6,6.3" fill="none" stroke="#a01ae8" stroke-width="2"/></svg>
<div class="a" style="left:316px;top:629px;width:917px;height:1px;background:#5e5b63"></div>
<div class="a" style="left:316px;top:630px;width:1px;height:30px;background:#5e5b63"></div>
<div class="a" style="left:366px;top:630px;width:1px;height:30px;background:#5e5b63"></div>
<div class="a" style="left:416px;top:630px;width:1px;height:30px;background:#5e5b63"></div>
<div class="a" style="left:556px;top:630px;width:1px;height:30px;background:#5e5b63"></div>
<div class="a" style="left:695px;top:630px;width:1px;height:30px;background:#5e5b63"></div>
<div class="a" style="left:751px;top:630px;width:1px;height:30px;background:#5e5b63"></div>
<div class="a" style="left:814px;top:630px;width:1px;height:30px;background:#5e5b63"></div>
<div class="a" style="left:954px;top:630px;width:1px;height:30px;background:#5e5b63"></div>
<div class="a" style="left:1094px;top:630px;width:1px;height:30px;background:#5e5b63"></div>
<div class="cb" style="left:332px;top:635px"></div>
<svg class="a" style="left:372px;top:630px" width="40" height="30" viewBox="0 0 40 30"><rect width="40" height="30" fill="#fff"/><path d="M4,3.5 L36,1.5 L36,21.5 L4,22Z" fill="#131316"/><rect x="19" y="22" width="3" height="3" fill="#222"/><ellipse cx="20" cy="26" rx="7" ry="1.2" fill="#333"/></svg>
<div class="t" style="left:423px;top:638.5px;font-size:13.6px;color:#f0f0f0;">SuperLCD 70</div>
<div class="t" style="right:1230px;top:638.5px;font-size:13.6px;color:#f0f0f0;">$2,125.00</div>
<div class="t" style="right:971px;top:638.5px;font-size:13.6px;color:#f0f0f0;">95</div>
<div class="t" style="right:831px;top:638.5px;font-size:13.6px;color:#f0f0f0;">0</div>
<div class="t" style="left:702px;top:638.5px;font-size:13.6px;color:#f0f0f0;">$3,2...</div>
<div class="t" style="left:758px;top:638.5px;font-size:13.6px;color:#f0f0f0;">$4,00...</div>
<div class="cb2" style="left:1154px;top:635px"></div>
<svg class="a" style="left:1154px;top:635px" width="20" height="20" viewBox="0 0 20 20"><path d="M4,10.3 L7.8,14 L15.6,6.3" fill="none" stroke="#a01ae8" stroke-width="2"/></svg>
<div class="a" style="left:316px;top:660px;width:917px;height:1px;background:#5e5b63"></div>
<div class="a" style="left:316px;top:661px;width:1px;height:30px;background:#5e5b63"></div>
<div class="a" style="left:366px;top:661px;width:1px;height:30px;background:#5e5b63"></div>
<div class="a" style="left:416px;top:661px;width:1px;height:30px;background:#5e5b63"></div>
<div class="a" style="left:556px;top:661px;width:1px;height:30px;background:#5e5b63"></div>
<div class="a" style="left:695px;top:661px;width:1px;height:30px;background:#5e5b63"></div>
<div class="a" style="left:751px;top:661px;width:1px;height:30px;background:#5e5b63"></div>
<div class="a" style="left:814px;top:661px;width:1px;height:30px;background:#5e5b63"></div>
<div class="a" style="left:954px;top:661px;width:1px;height:30px;background:#5e5b63"></div>
<div class="a" style="left:1094px;top:661px;width:1px;height:30px;background:#5e5b63"></div>
<div class="cb" style="left:332px;top:666px"></div>
<svg class="a" style="left:372px;top:661px" width="40" height="30" viewBox="0 0 40 30"><defs><linearGradient id="tg4" x1="0" y1="0" x2="1" y2="1"><stop offset="0" stop-color="#6a6a6a"/><stop offset="0.35" stop-color="#0a0a0a"/><stop offset="1" stop-color="#000"/></linearGradient></defs><rect width="40" height="30" fill="#fff"/><rect x="2" y="3" width="35.6" height="22" fill="#c8c8cc"/><rect x="3" y="4" width="33.6" height="20" fill="url(#tg4)"/><rect x="12" y="26" width="16" height="1.5" fill="#b0b0b4"/></svg>
<div class="t" style="left:423px;top:669.5px;font-size:13.6px;color:#f0f0f0;">SuperLED 42</div>
<div class="t" style="right:1230px;top:669.5px;font-size:13.6px;color:#f0f0f0;">$675.00</div>
<div class="t" style="right:971px;top:669.5px;font-size:13.6px;color:#f0f0f0;">445</div>
<div class="t" style="right:831px;top:669.5px;font-size:13.6px;color:#f0f0f0;">0</div>
<div class="t" style="left:702px;top:669.5px;font-size:13.6px;color:#f0f0f0;">$1,0...</div>
<div class="t" style="left:758px;top:669.5px;font-size:13.6px;color:#f0f0f0;">$1,45...</div>
<div class="cb2" style="left:1154px;top:666px"></div>
<svg class="a" style="left:1154px;top:666px" width="20" height="20" viewBox="0 0 20 20"><path d="M4,10.3 L7.8,14 L15.6,6.3" fill="none" stroke="#a01ae8" stroke-width="2"/></svg>
<div class="a" style="left:316px;top:691px;width:917px;height:1px;background:#5e5b63"></div>
<div class="a" style="left:316px;top:692px;width:1px;height:30px;background:#5e5b63"></div>
<div class="a" style="left:366px;top:692px;width:1px;height:30px;background:#5e5b63"></div>
<div class="a" style="left:416px;top:692px;width:1px;height:30px;background:#5e5b63"></div>
<div class="a" style="left:556px;top:692px;width:1px;height:30px;background:#5e5b63"></div>
<div class="a" style="left:695px;top:692px;width:1px;height:30px;background:#5e5b63"></div>
<div class="a" style="left:751px;top:692px;width:1px;height:30px;background:#5e5b63"></div>
<div class="a" style="left:814px;top:692px;width:1px;height:30px;background:#5e5b63"></div>
<div class="a" style="left:954px;top:692px;width:1px;height:30px;background:#5e5b63"></div>
<div class="a" style="left:1094px;top:692px;width:1px;height:30px;background:#5e5b63"></div>
<div class="cb" style="left:332px;top:697px"></div>
<svg class="a" style="left:372px;top:692px" width="40" height="30" viewBox="0 0 40 30"><rect width="40" height="30" fill="#fff"/><rect x="1" y="0" width="38" height="24.5" fill="#0c0c0e"/><rect x="2" y="1" width="36" height="22.5" fill="#18181c"/><path d="M10,28 L30,28 L26,25 L14,25Z" fill="#222"/></svg>
<div class="t" style="left:423px;top:700.5px;font-size:13.6px;color:#f0f0f0;">SuperLED 50</div>
<div class="t" style="right:1230px;top:700.5px;font-size:13.6px;color:#f0f0f0;">$775.00</div>
<div class="t" style="right:971px;top:700.5px;font-size:13.6px;color:#f0f0f0;">77</div>
<div class="t" style="right:831px;top:700.5px;font-size:13.6px;color:#f0f0f0;">0</div>
<div class="t" style="left:702px;top:700.5px;font-size:13.6px;color:#f0f0f0;">$1,1...</div>
<div class="t" style="left:758px;top:700.5px;font-size:13.6px;color:#f0f0f0;">$1,60...</div>
<div class="cb2" style="left:1154px;top:697px"></div>
<svg class="a" style="left:1154px;top:697px" width="20" height="20" viewBox="0 0 20 20"><path d="M4,10.3 L7.8,14 L15.6,6.3" fill="none" stroke="#a01ae8" stroke-width="2"/></svg>
<div class="a" style="left:316px;top:722px;width:917px;height:1px;background:#5e5b63"></div>
<div class="a" style="left:316px;top:723px;width:1px;height:30px;background:#5e5b63"></div>
<div class="a" style="left:366px;top:723px;width:1px;height:30px;background:#5e5b63"></div>
<div class="a" style="left:416px;top:723px;width:1px;height:30px;background:#5e5b63"></div>
<div class="a" style="left:556px;top:723px;width:1px;height:30px;background:#5e5b63"></div>
<div class="a" style="left:695px;top:723px;width:1px;height:30px;background:#5e5b63"></div>
<div class="a" style="left:751px;top:723px;width:1px;height:30px;background:#5e5b63"></div>
<div class="a" style="left:814px;top:723px;width:1px;height:30px;background:#5e5b63"></div>
<div class="a" style="left:954px;top:723px;width:1px;height:30px;background:#5e5b63"></div>
<div class="a" style="left:1094px;top:723px;width:1px;height:30px;background:#5e5b63"></div>
<div class="cb" style="left:332px;top:728px"></div>
<svg class="a" style="left:372px;top:723px" width="40" height="30" viewBox="0 0 40 30"><rect width="40" height="30" fill="#e6e6e2"/><rect x="2.5" y="1.5" width="35" height="21.5" fill="#d4d0c0"/><rect x="4.5" y="3.5" width="31" height="17" fill="#3a3a30"/><rect x="3" y="23.5" width="34" height="1.5" fill="#c4c0b0"/><rect x="13" y="25.5" width="14" height="2.5" fill="#c8c8c4"/></svg>
<div class="t" style="left:423px;top:731.5px;font-size:13.6px;color:#f0f0f0;text-decoration:line-through;">SuperPlasma 50</div>
<div class="t" style="right:1230px;top:731.5px;font-size:13.6px;color:#f0f0f0;text-decoration:line-through;">$1,100.00</div>
<div class="t" style="right:971px;top:731.5px;font-size:13.6px;color:#f0f0f0;text-decoration:line-through;">0</div>
<div class="t" style="right:831px;top:731.5px;font-size:13.6px;color:#f0f0f0;text-decoration:line-through;">0</div>
<div class="t" style="left:702px;top:731.5px;font-size:13.6px;color:#f0f0f0;text-decoration:line-through;">$1,8...</div>
<div class="t" style="left:758px;top:731.5px;font-size:13.6px;color:#f0f0f0;text-decoration:line-through;">$2,40...</div>
<div class="cb2" style="left:1154px;top:728px"></div>
<div class="a" style="left:316px;top:753px;width:917px;height:1px;background:#5e5b63"></div>
<div class="a" style="left:316px;top:754px;width:1px;height:30px;background:#5e5b63"></div>
<div class="a" style="left:366px;top:754px;width:1px;height:30px;background:#5e5b63"></div>
<div class="a" style="left:416px;top:754px;width:1px;height:30px;background:#5e5b63"></div>
<div class="a" style="left:556px;top:754px;width:1px;height:30px;background:#5e5b63"></div>
<div class="a" style="left:695px;top:754px;width:1px;height:30px;background:#5e5b63"></div>
<div class="a" style="left:751px;top:754px;width:1px;height:30px;background:#5e5b63"></div>
<div class="a" style="left:814px;top:754px;width:1px;height:30px;background:#5e5b63"></div>
<div class="a" style="left:954px;top:754px;width:1px;height:30px;background:#5e5b63"></div>
<div class="a" style="left:1094px;top:754px;width:1px;height:30px;background:#5e5b63"></div>
<div class="cb" style="left:332px;top:759px"></div>
<svg class="a" style="left:372px;top:754px" width="40" height="30" viewBox="0 0 40 30"><rect width="40" height="30" fill="#e4e6ea"/><rect x="3" y="2" width="34" height="22" fill="#b4b8be"/><rect x="6" y="4" width="28" height="15.5" fill="#101012"/><rect x="6" y="20.5" width="28" height="2" fill="#d0d4d8"/><rect x="10" y="25" width="20" height="3" fill="#c0c4c8"/></svg>
<div class="t" style="left:423px;top:762.5px;font-size:13.6px;color:#f0f0f0;text-decoration:line-through;">SuperPlasma 65</div>
<div class="t" style="right:1230px;top:762.5px;font-size:13.6px;color:#f0f0f0;text-decoration:line-through;">$1,800.00</div>
<div class="t" style="right:971px;top:762.5px;font-size:13.6px;color:#f0f0f0;text-decoration:line-through;">0</div>
<div class="t" style="right:831px;top:762.5px;font-size:13.6px;color:#f0f0f0;text-decoration:line-through;">0</div>
<div class="t" style="left:702px;top:762.5px;font-size:13.6px;color:#f0f0f0;text-decoration:line-through;">$2,9...</div>
<div class="t" style="left:758px;top:762.5px;font-size:13.6px;color:#f0f0f0;text-decoration:line-through;">$3,50...</div>
<div class="cb2" style="left:1154px;top:759px"></div>
<div class="a" style="left:287px;top:784px;width:946px;height:1px;background:#5e5b63"></div>
<svg class="a" style="left:297px;top:795px" width="11" height="7" viewBox="0 0 15 9"><path d="M1.2,1.2 L7.5,7.5 L13.8,1.2" fill="none" stroke="#d0ced4" stroke-width="2.2"/></svg>
<div class="t" style="left:322px;top:792px;font-size:14px;color:#f0f0f0">Category: Video players (Count: 2)</div>
<div class="a" style="left:316px;top:813px;width:917px;height:1px;background:#5e5b63"></div>
<div class="a" style="left:316px;top:814px;width:1px;height:30px;background:#5e5b63"></div>
<div class="a" style="left:366px;top:814px;width:1px;height:30px;background:#5e5b63"></div>
<div class="a" style="left:416px;top:814px;width:1px;height:30px;background:#5e5b63"></div>
<div class="a" style="left:556px;top:814px;width:1px;height:30px;background:#5e5b63"></div>
<div class="a" style="left:695px;top:814px;width:1px;height:30px;background:#5e5b63"></div>
<div class="a" style="left:751px;top:814px;width:1px;height:30px;background:#5e5b63"></div>
<div class="a" style="left:814px;top:814px;width:1px;height:30px;background:#5e5b63"></div>
<div class="a" style="left:954px;top:814px;width:1px;height:30px;background:#5e5b63"></div>
<div class="a" style="left:1094px;top:814px;width:1px;height:30px;background:#5e5b63"></div>
<div class="cb" style="left:332px;top:819px"></div>
<svg class="a" style="left:372px;top:814px" width="40" height="30" viewBox="0 0 40 30"><rect width="40" height="30" fill="#fff"/><path d="M2,15.5 L7,11.5 L33,11.5 L38,15.5 L37,18.5 L3,18.5Z" fill="#151517"/><path d="M2,15.5 L38,15.5" stroke="#3a3a40" stroke-width="0.6"/><circle cx="19" cy="17" r="0.6" fill="#4a80e0"/></svg>
<div class="t" style="left:423px;top:822.5px;font-size:13.6px;color:#f0f0f0;">HD Video Player</div>
<div class="t" style="right:1230px;top:822.5px;font-size:13.6px;color:#f0f0f0;">$110.00</div>
<div class="t" style="right:971px;top:822.5px;font-size:13.6px;color:#f0f0f0;">225</div>
<div class="t" style="right:831px;top:822.5px;font-size:13.6px;color:#f0f0f0;">0</div>
<div class="t" style="left:702px;top:822.5px;font-size:13.6px;color:#f0f0f0;">$220...</div>
<div class="t" style="right:1111px;top:822.5px;font-size:13.6px;color:#f0f0f0;">$330.00</div>
<div class="cb2" style="left:1154px;top:819px"></div>
<svg class="a" style="left:1154px;top:819px" width="20" height="20" viewBox="0 0 20 20"><path d="M4,10.3 L7.8,14 L15.6,6.3" fill="none" stroke="#a01ae8" stroke-width="2"/></svg>
<div class="a" style="left:316px;top:844px;width:917px;height:1px;background:#5e5b63"></div>
<div class="a" style="left:316px;top:845px;width:1px;height:30px;background:#5e5b63"></div>
<div class="a" style="left:366px;top:845px;width:1px;height:30px;background:#5e5b63"></div>
<div class="a" style="left:416px;top:845px;width:1px;height:30px;background:#5e5b63"></div>
<div class="a" style="left:556px;top:845px;width:1px;height:30px;background:#5e5b63"></div>
<div class="a" style="left:695px;top:845px;width:1px;height:30px;background:#5e5b63"></div>
<div class="a" style="left:751px;top:845px;width:1px;height:30px;background:#5e5b63"></div>
<div class="a" style="left:814px;top:845px;width:1px;height:30px;background:#5e5b63"></div>
<div class="a" style="left:954px;top:845px;width:1px;height:30px;background:#5e5b63"></div>
<div class="a" style="left:1094px;top:845px;width:1px;height:30px;background:#5e5b63"></div>
<div class="cb" style="left:332px;top:850px"></div>
<svg class="a" style="left:372px;top:845px" width="40" height="30" viewBox="0 0 40 30"><rect width="40" height="30" fill="#efebe4"/><path d="M1.5,10 L24,2.5 L38,9 L37.5,22 L14,29 L1.5,21Z" fill="#3a3835"/><path d="M1.5,10 L24,2.5 L38,9 L14,17Z" fill="#4e4b46"/><path d="M11,8 L22,4.5 L30,8.5 L19,12.5Z" fill="#d8d6d0"/><path d="M16,10 L24,5 L26,6 L18,11Z" fill="#5a5854"/><path d="M14,17 L38,9 L37.5,12 L14,20Z" fill="#28261f"/><rect x="16" y="23" width="16" height="1.5" fill="#8a4a3a" transform="rotate(-17 24 23)"/></svg>
<div class="t" style="left:423px;top:853.5px;font-size:13.6px;color:#f0f0f0;">SuperHD Video Pl...</div>
<div class="t" style="right:1230px;top:853.5px;font-size:13.6px;color:#f0f0f0;">$175.00</div>
<div class="t" style="right:971px;top:853.5px;font-size:13.6px;color:#f0f0f0;">150</div>
<div class="t" style="right:831px;top:853.5px;font-size:13.6px;color:#f0f0f0;">0</div>
<div class="t" style="left:702px;top:853.5px;font-size:13.6px;color:#f0f0f0;">$275...</div>
<div class="t" style="right:1111px;top:853.5px;font-size:13.6px;color:#f0f0f0;">$400.00</div>
<div class="cb2" style="left:1154px;top:850px"></div>
<svg class="a" style="left:1154px;top:850px" width="20" height="20" viewBox="0 0 20 20"><path d="M4,10.3 L7.8,14 L15.6,6.3" fill="none" stroke="#a01ae8" stroke-width="2"/></svg>
<div class="a" style="left:287px;top:875px;width:946px;height:1px;background:#5e5b63"></div>
<div class="a" style="left:287px;top:909px;width:946px;height:1px;background:#5e5b63"></div>
<div class="a" style="left:287px;top:910px;width:946px;height:28px;background:#403d45"></div>
<div class="t" style="left:422px;top:919px;font-size:14px;font-weight:700;color:#fff">Count: 19</div>
<div class="t" style="right:972px;top:919px;font-size:14px;font-weight:700;color:#fff">Sum: 3,402</div>
<div class="t" style="right:832px;top:919px;font-size:14px;font-weight:700;color:#fff">Sum: 880</div>
<div class="a" style="left:1250px;top:112px;width:7px;height:841px;background:#423f48;border-radius:3px"></div>
<div class="a" style="left:1251px;top:526px;width:2px;height:14px;background:#d6d6d6"></div>
<div class="a" style="left:1254px;top:526px;width:2px;height:14px;background:#d6d6d6"></div>
<div class="a" style="left:1273px;top:112px;width:615px;height:827px;background:#38363e;border:1px solid #2c2a30;border-bottom:none;border-radius:4px 4px 0 0"></div>
<div class="a" style="left:1901px;top:112px;width:3px;height:718px;background:#a2a0a7;border-radius:2px"></div>
<div class="a" style="left:1283px;top:145px;width:595px;height:768px;background:#fff;border:1px solid #8a12e6;overflow:hidden;box-shadow:0 0 14px 6px rgba(0,0,0,0.13)">
<svg class="a" style="left:452px;top:40px" width="106" height="30" viewBox="0 0 106 30">
<line x1="12.8" y1="3.5" x2="17.2" y2="11" stroke="#8a8f96" stroke-width="1"/><line x1="22.3" y1="1" x2="17.2" y2="11" stroke="#8a8f96" stroke-width="1"/>
<ellipse cx="14" cy="20.4" rx="13" ry="8" fill="#263140"/><ellipse cx="11.8" cy="19.9" rx="8.8" ry="4.9" fill="#fff"/><circle cx="16.5" cy="11.5" r="1.6" fill="#263140"/><circle cx="23" cy="21" r="1" fill="#c0c4c8"/>
<path fill-rule="evenodd" d="M30,13 H37 Q44.5,13 44.5,19.5 Q44.5,26 37,26 H30Z M33.3,16.2 V22.8 H36.5 Q40.8,22.8 40.8,19.5 Q40.8,16.2 36.5,16.2Z" fill="#263140"/>
<path d="M48,17 H59 V19.2 H51.3 V20.6 H58 V22.4 H51.3 V23.8 H59 V26 H48Z" fill="#263140"/>
<path d="M60.3,17 L67,25.3 L73.7,17" fill="none" stroke="#263140" stroke-width="3"/>
<path d="M71.5,26.5 L80.5,13 L89.5,26.5 M75.3,21.5 H85.7" fill="none" stroke="#f5a040" stroke-width="1.2"/>
<path d="M87.6,13 L95.6,26.5 L103.6,13" fill="none" stroke="#f5a040" stroke-width="1.2"/>
</svg>
<div class="a" style="left:37px;top:77px;width:519px;height:2px;background:#f8bb7c"></div>
<div class="t" style="left:71px;top:87px;font-size:18.5px;color:#111">DX-H5000</div>
<div class="t" style="left:168px;top:87px;font-size:17.4px;color:#3a3a48;letter-spacing:-0.1px">DesktopLCD 19</div>
<div class="a" style="left:33px;top:116px;width:340px;height:222px;background:linear-gradient(#fff,#fcfcfc 40%,#fdfdfd)"></div>
<svg class="a" style="left:26px;top:109px" width="520" height="240" viewBox="1310 255 520 240">
<ellipse cx="1492" cy="477" rx="60" ry="3" fill="#e4e4ea"/>
<path d="M1414,321.5 L1586,273.5 Q1590,273 1590,277 L1590,432 L1404,441 Q1402,441 1402.5,438Z" fill="#0d0d0f"/>
<path d="M1418,328 L1580,284 L1578.5,418 L1410,429Z" fill="#fff"/>
<path d="M1403,434 L1590,424 L1590,432 L1404,441Z" fill="#1a1a1e"/>
<path d="M1479,441 L1504,440 Q1506,455 1513,466 L1478,467Z" fill="#15151a"/>
<path d="M1437,472 Q1440,466 1480,466 L1515,466 Q1545,467 1548,471 L1546,476 Q1500,478 1440,477Z" fill="#101014"/>
<path d="M1683,331 L1800,413 Q1806,424 1796,436 L1663,360 Q1657,352 1665,341 Q1672,332 1683,331Z" fill="#161618"/><circle cx="1679.9" cy="339.2" r="3" fill="#d8303a"/><circle cx="1688.1" cy="346.8" r="1.9" fill="#a0a0a6"/><circle cx="1684.3" cy="352.7" r="1.9" fill="#a0a0a6"/><circle cx="1680.6" cy="358.6" r="1.9" fill="#a0a0a6"/><circle cx="1694.4" cy="350.9" r="1.9" fill="#a0a0a6"/><circle cx="1690.6" cy="356.7" r="1.9" fill="#a0a0a6"/><circle cx="1686.9" cy="362.6" r="1.9" fill="#a0a0a6"/><circle cx="1700.7" cy="354.9" r="1.9" fill="#a0a0a6"/><circle cx="1697.0" cy="360.8" r="1.9" fill="#a0a0a6"/><circle cx="1693.2" cy="366.7" r="1.9" fill="#a0a0a6"/><circle cx="1707.1" cy="358.9" r="1.9" fill="#a0a0a6"/><circle cx="1703.3" cy="364.8" r="1.9" fill="#a0a0a6"/><circle cx="1699.5" cy="370.7" r="1.9" fill="#a0a0a6"/><circle cx="1689.1" cy="341.5" r="1.9" fill="#a0a0a6"/><circle cx="1710.5" cy="356.4" r="1.9" fill="#a0a0a6"/><circle cx="1704.2" cy="377.3" r="1.9" fill="#a0a0a6"/><circle cx="1732.0" cy="382.0" r="1.9" fill="#a0a0a6"/><circle cx="1733.4" cy="394.8" r="1.9" fill="#a0a0a6"/><circle cx="1746.0" cy="386.2" r="1.9" fill="#a0a0a6"/><circle cx="1748.4" cy="397.3" r="1.9" fill="#a0a0a6"/><circle cx="1758.4" cy="396.5" r="1.9" fill="#a0a0a6"/><circle cx="1759.7" cy="409.3" r="1.9" fill="#a0a0a6"/><circle cx="1770.8" cy="406.8" r="1.9" fill="#a0a0a6"/><circle cx="1719.5" cy="377.6" r="9.5" fill="#8e8e94"/><circle cx="1719.5" cy="377.6" r="5.8" fill="#2aa848"/><circle cx="1733.5" cy="372.3" r="1.6" fill="#e06a20"/><rect x="1752.3" y="401.0" width="9" height="5" rx="2" fill="#a0a0a6" transform="rotate(33 1756.3 403.5)"/>
</svg>
<div class="t" style="left:71px;top:354px;font-size:17px;color:#111;transform:scaleX(0.935);transform-origin:0 0">19” BRILLIANCE LCD MONITOR</div>
<div class="t" style="left:72px;top:392.0px;font-size:9.5px;color:#1a1a1a;transform:scaleX(0.902);transform-origin:0 0">The 19” Brilliance LCD Computer Monitor is changing the way people display computer signals. It’s amazing build quality and</div>
<div class="t" style="left:72px;top:406.29999999999995px;font-size:9.5px;color:#1a1a1a;transform:scaleX(0.902);transform-origin:0 0">high precision design means you get the best possible computer picture for the best possible price. It delivers crystal-clear</div>
<div class="t" style="left:72px;top:420.6px;font-size:9.5px;color:#1a1a1a;transform:scaleX(0.902);transform-origin:0 0">images with mind-blowing video. The bottom-line is simple, this Monitor offers Full HD resolution with 240Hz refresh rate. A</div>
<div class="t" style="left:72px;top:434.9px;font-size:9.5px;color:#1a1a1a;transform:scaleX(0.902);transform-origin:0 0">thin frame design with super thin profile makes mounting this Monitor a breeze. This super-smart remote includes a built-in</div>
<div class="t" style="left:72px;top:449.20000000000005px;font-size:9.5px;color:#1a1a1a;transform:scaleX(0.902);transform-origin:0 0">keypad for straightforward channel surfing when connected to a video source. The remote is also backlit so you can easily</div>
<div class="t" style="left:72px;top:463.5px;font-size:9.5px;color:#1a1a1a;transform:scaleX(0.902);transform-origin:0 0">change channels in the dark. The 19” Brilliance LCD Computer Monitor also includes four video input options so you can</div>
<div class="t" style="left:72px;top:477.79999999999995px;font-size:9.5px;color:#1a1a1a;transform:scaleX(0.902);transform-origin:0 0">display any video signal with ease.</div>
<div class="a" style="left:72px;top:515px;width:236px;height:25px;background:#dcdcde"></div>
<div class="t" style="left:81px;top:522px;font-size:10px;color:#222">Monitor Specifications</div>
<div class="a" style="left:72px;top:540px;width:118px;height:12.3px;background:#fcfcfc"></div>
<div class="a" style="left:191px;top:540px;width:117px;height:12.3px;background:#fcfcfc"></div>
<div class="t" style="left:76px;top:542.15px;font-size:7px;color:#111">Screen Size</div>
<div class="t" style="left:194px;top:542.15px;font-size:7px;color:#111">19”</div>
<div class="a" style="left:72px;top:553.3px;width:118px;height:12.3px;background:#d6d6d8"></div>
<div class="a" style="left:191px;top:553.3px;width:117px;height:12.3px;background:#d6d6d8"></div>
<div class="t" style="left:76px;top:555.4499999999999px;font-size:7px;color:#111">Diagonal Viewable</div>
<div class="t" style="left:194px;top:555.4499999999999px;font-size:7px;color:#111">18”</div>
<div class="a" style="left:72px;top:566.5999999999999px;width:118px;height:12.3px;background:#f4f4f4"></div>
<div class="a" style="left:191px;top:566.5999999999999px;width:117px;height:12.3px;background:#f4f4f4"></div>
<div class="t" style="left:76px;top:568.7499999999999px;font-size:7px;color:#111">TV Type</div>
<div class="t" style="left:194px;top:568.7499999999999px;font-size:7px;color:#111">DesktopLCD</div>
<div class="a" style="left:72px;top:579.8999999999999px;width:118px;height:12.3px;background:#d6d6d8"></div>
<div class="a" style="left:191px;top:579.8999999999999px;width:117px;height:12.3px;background:#d6d6d8"></div>
<div class="t" style="left:76px;top:582.0499999999998px;font-size:7px;color:#111">Intelligent TV</div>
<div class="t" style="left:194px;top:582.0499999999998px;font-size:7px;color:#111">Yes</div>
<div class="a" style="left:72px;top:593.1999999999998px;width:118px;height:12.3px;background:#f4f4f4"></div>
<div class="a" style="left:191px;top:593.1999999999998px;width:117px;height:12.3px;background:#f4f4f4"></div>
<div class="t" style="left:76px;top:595.3499999999998px;font-size:7px;color:#111">Built-in WiFi</div>
<div class="t" style="left:194px;top:595.3499999999998px;font-size:7px;color:#111">Yes</div>
<div class="a" style="left:72px;top:606.4999999999998px;width:118px;height:12.3px;background:#d6d6d8"></div>
<div class="a" style="left:191px;top:606.4999999999998px;width:117px;height:12.3px;background:#d6d6d8"></div>
<div class="t" style="left:76px;top:608.6499999999997px;font-size:7px;color:#111">Refresh Rate</div>
<div class="t" style="left:194px;top:608.6499999999997px;font-size:7px;color:#111">120Hz</div>
<div class="a" style="left:72px;top:619.7999999999997px;width:118px;height:12.3px;background:#f4f4f4"></div>
<div class="a" style="left:191px;top:619.7999999999997px;width:117px;height:12.3px;background:#f4f4f4"></div>
<div class="t" style="left:76px;top:621.9499999999997px;font-size:7px;color:#111">Maximum Resolution</div>
<div class="t" style="left:194px;top:621.9499999999997px;font-size:7px;color:#111">1080p</div>
<div class="a" style="left:72px;top:633.0999999999997px;width:118px;height:12.3px;background:#d6d6d8"></div>
<div class="a" style="left:191px;top:633.0999999999997px;width:117px;height:12.3px;background:#d6d6d8"></div>
<div class="t" style="left:76px;top:635.2499999999997px;font-size:7px;color:#111">Dynamic Contrast Ratio</div>
<div class="t" style="left:194px;top:635.2499999999997px;font-size:7px;color:#111">2 Million to 1</div>
<div class="a" style="left:72px;top:646.3999999999996px;width:118px;height:12.3px;background:#f4f4f4"></div>
<div class="a" style="left:191px;top:646.3999999999996px;width:117px;height:12.3px;background:#f4f4f4"></div>
<div class="t" style="left:76px;top:648.5499999999996px;font-size:7px;color:#111">Remote Control Type</div>
<div class="t" style="left:194px;top:648.5499999999996px;font-size:7px;color:#111">DX302</div>
<div class="a" style="left:72px;top:659.6999999999996px;width:118px;height:12.3px;background:#d6d6d8"></div>
<div class="a" style="left:191px;top:659.6999999999996px;width:117px;height:12.3px;background:#d6d6d8"></div>
<div class="t" style="left:76px;top:661.8499999999996px;font-size:7px;color:#111">Light Sensor</div>
<div class="t" style="left:194px;top:661.8499999999996px;font-size:7px;color:#111">No</div>
<div class="a" style="left:72px;top:672.9999999999995px;width:118px;height:12.3px;background:#f4f4f4"></div>
<div class="a" style="left:191px;top:672.9999999999995px;width:117px;height:12.3px;background:#f4f4f4"></div>
<div class="t" style="left:76px;top:675.1499999999995px;font-size:7px;color:#111">Energy Star Qualified</div>
<div class="t" style="left:194px;top:675.1499999999995px;font-size:7px;color:#111">ENERGY STAR® 6.0</div>
<div class="a" style="left:318px;top:515px;width:237px;height:25px;background:#dcdcde"></div>
<div class="t" style="left:327px;top:521px;font-size:11px;color:#222">Dimensions (WxHxD)</div>
<div class="a" style="left:318px;top:540px;width:118px;height:14px;background:#fcfcfc"></div>
<div class="a" style="left:437px;top:540px;width:118px;height:14px;background:#fcfcfc"></div>
<div class="t" style="left:322px;top:543.0px;font-size:7px;color:#111">Product Dimensions</div>
<div class="t" style="left:440px;top:543.0px;font-size:7px;color:#111">21” x 14” x 3”</div>
<div class="a" style="left:318px;top:555px;width:118px;height:11px;background:#d6d6d8"></div>
<div class="a" style="left:437px;top:555px;width:118px;height:11px;background:#d6d6d8"></div>
<div class="t" style="left:322px;top:556.5px;font-size:7px;color:#111">Product Weight</div>
<div class="t" style="left:440px;top:556.5px;font-size:7px;color:#111">27 lbs</div>
<div class="a" style="left:318px;top:567px;width:118px;height:27px;background:#f4f4f4"></div>
<div class="a" style="left:437px;top:567px;width:118px;height:27px;background:#f4f4f4"></div>
<div class="t" style="left:322px;top:569px;font-size:7px;color:#111;line-height:8.5px">Product Dimensions<br>without Stand</div>
<div class="t" style="left:440px;top:577.0px;font-size:7px;color:#111">N/A</div>
<div class="a" style="left:318px;top:595px;width:118px;height:23px;background:#d6d6d8"></div>
<div class="a" style="left:437px;top:595px;width:118px;height:23px;background:#d6d6d8"></div>
<div class="t" style="left:322px;top:597px;font-size:7px;color:#111;line-height:8.5px">Product Weight without<br>Stand</div>
<div class="t" style="left:440px;top:603.0px;font-size:7px;color:#111">N/A</div>
<div class="a" style="left:318px;top:619px;width:118px;height:14px;background:#f4f4f4"></div>
<div class="a" style="left:437px;top:619px;width:118px;height:14px;background:#f4f4f4"></div>
<div class="t" style="left:322px;top:622.0px;font-size:7px;color:#111">Shipping Dimensions</div>
<div class="t" style="left:440px;top:622.0px;font-size:7px;color:#111">21” x 14” x 3”</div>
<div class="a" style="left:318px;top:634px;width:118px;height:11px;background:#d6d6d8"></div>
<div class="a" style="left:437px;top:634px;width:118px;height:11px;background:#d6d6d8"></div>
<div class="t" style="left:322px;top:635.5px;font-size:7px;color:#111">Shipping Weight</div>
<div class="t" style="left:440px;top:635.5px;font-size:7px;color:#111">30 lbs</div>
<div class="a" style="left:318px;top:646px;width:118px;height:14px;background:#f4f4f4"></div>
<div class="a" style="left:437px;top:646px;width:118px;height:14px;background:#f4f4f4"></div>
<div class="t" style="left:322px;top:649.0px;font-size:7px;color:#111">WARRANTY</div>
<div class="t" style="left:440px;top:649.0px;font-size:7px;color:#111">1 year</div>
<div class="a" style="left:318px;top:661px;width:118px;height:11px;background:#d6d6d8"></div>
<div class="a" style="left:437px;top:661px;width:118px;height:11px;background:#d6d6d8"></div>
<div class="t" style="left:322px;top:662.5px;font-size:7px;color:#111"></div>
<div class="t" style="left:440px;top:662.5px;font-size:7px;color:#111"></div>
<div class="a" style="left:318px;top:673px;width:118px;height:13px;background:#f4f4f4"></div>
<div class="a" style="left:437px;top:673px;width:118px;height:13px;background:#f4f4f4"></div>
<div class="t" style="left:322px;top:675.5px;font-size:7px;color:#111"></div>
<div class="t" style="left:440px;top:675.5px;font-size:7px;color:#111"></div>
<div class="a" style="left:0px;top:749px;width:600px;height:17px;background:#f7941d"></div>
<div class="t" style="left:71px;top:751.5px;font-size:6.6px;color:#fde5c8">All trademarks or registered trademarks are property of their respective owners. This is not a real product.</div>
</div>
<!--BODY-->
</body></html>
